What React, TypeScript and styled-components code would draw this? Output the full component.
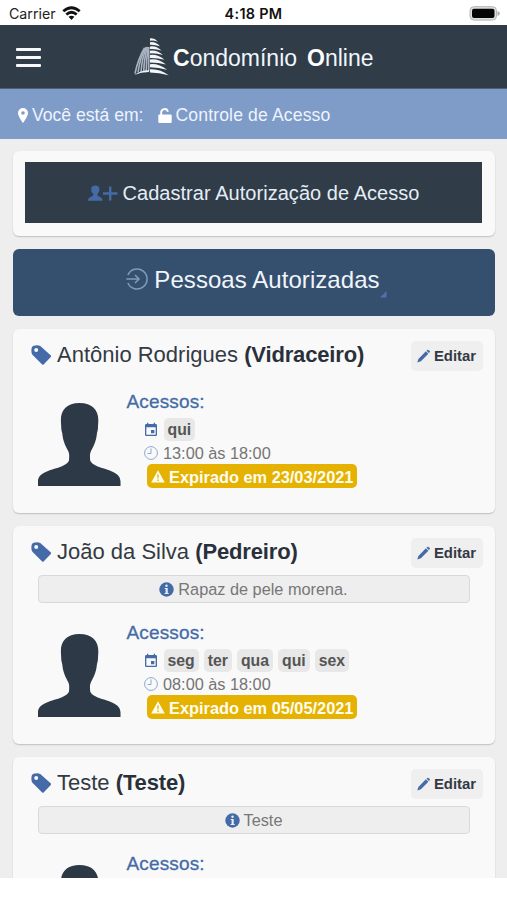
import React from "react";
import styled, { createGlobalStyle } from "styled-components";
import { MdEvent } from "react-icons/md";

const navy = "#303c48";
const blue = "#446ba8";

const GlobalStyle = createGlobalStyle`
  * { box-sizing: border-box; }
  body { margin: 0; background: #fff; font-family: "Liberation Sans", Arial, sans-serif; }
  svg { display: block; flex: none; }
`;

const Screen = styled.div`
  width: 507px;
  height: 900px;
  display: flex;
  flex-direction: column;
  overflow: hidden;
  background: #fff;
`;

const StatusBar = styled.div`
  height: 25px;
  flex: none;
  display: grid;
  grid-template-columns: 1fr auto 1fr;
  align-items: center;
  padding: 2px 7px 0 9px;
  font: 400 14.2px/20px Inter, sans-serif;
  color: #222;
`;

const Carrier = styled.div`
  display: flex;
  align-items: center;
  gap: 6px;
`;

const Time = styled.div`
  font-weight: 600;
  font-size: 14.4px;
  letter-spacing: 0.3px;
  margin-right: 2px;
  color: #111;
`;

const BatterySlot = styled.div`
  justify-self: end;
`;

const Header = styled.header`
  height: 64px;
  flex: none;
  display: flex;
  align-items: center;
  padding-left: 16px;
  background: ${navy};
  border-bottom: 1px solid #4f6075;
`;

const MenuButton = styled.button`
  width: 25px;
  height: 19px;
  margin-top: 2px;
  padding: 0;
  border: 0;
  background: none;
  display: flex;
  flex-direction: column;
  justify-content: space-between;

  span { height: 3px; width: 25px; background: #f6f8fa; border-radius: 1px; }
`;

const Brand = styled.div`
  display: flex;
  align-items: center;
  gap: 4px;
  margin-left: 93px;
  color: #f1f6fc;
  font-size: 23px;
  line-height: 28px;
  white-space: pre;
`;

const BrandName = styled.div`
  display: flex;
  gap: 10px;
  margin-top: 2px;
  b { color: #fff; }
`;

const Crumbs = styled.nav`
  height: 50px;
  flex: none;
  display: flex;
  align-items: center;
  padding: 2px 0 0 18px;
  background: #7f9bc8;
  color: #edf4fd;
  font-size: 17.6px;
  line-height: 22px;
`;

const Crumb = styled.div<{ $spacing: number }>`
  display: flex;
  align-items: center;
  gap: 4px;
  letter-spacing: ${(p) => p.$spacing}px;
  & + & { margin-left: 14px; }
`;

const Content = styled.main`
  height: 739px;
  flex: none;
  overflow: hidden;
  display: flex;
  flex-direction: column;
  gap: 13px;
  padding: 12px 12px 0 13px;
  background: #eee;
`;

const Card = styled.section<{ $height: number }>`
  height: ${(p) => p.$height}px;
  flex: none;
  border-radius: 6px;
  background: #f9f9f9;
  box-shadow: 0 1px 1.5px rgba(0, 0, 0, 0.2);
`;

const ActionCard = styled(Card)`
  padding: 11px 13px 0 12px;
`;

const AddButton = styled.button`
  width: 100%;
  height: 61px;
  display: flex;
  align-items: center;
  justify-content: center;
  gap: 5px;
  padding: 1px 0 0;
  border: 0;
  background: ${navy};
  color: #e4edf6;
  font: 400 20px/24px "Liberation Sans", Arial, sans-serif;
  letter-spacing: 0.04px;
`;

const SectionTitle = styled.h2`
  height: 67px;
  flex: none;
  margin: 0;
  display: flex;
  align-items: flex-start;
  justify-content: center;
  gap: 6px;
  padding: 17px 0 0 5px;
  border-radius: 6px;
  background: #35506e;
  color: #f0f5fb;
  font-size: 24px;
  font-weight: 400;
  line-height: 28px;
  letter-spacing: 0.06px;
  svg:first-child { margin-top: 2px; }
  svg:last-child { margin: 25px 0 0 -6px; }
`;

const PersonHead = styled.div`
  height: 52px;
  display: flex;
  align-items: center;
  padding: 0 12px 0 18px;
`;

const PersonName = styled.h3`
  margin: 0 0 0 5px;
  flex: 1;
  font-size: 22px;
  line-height: 26px;
  font-weight: 400;
  color: #343a43;
  white-space: nowrap;
  b { color: #29303a; letter-spacing: -0.15px; }
`;

const EditButton = styled.button`
  height: 30px;
  width: 72px;
  margin-top: 2px;
  display: flex;
  align-items: center;
  justify-content: center;
  gap: 4px;
  padding: 0 1px 0 0;
  border: 0;
  border-radius: 5px;
  background: #efefef;
  color: #333944;
  font: 700 14.9px/18px "Liberation Sans", Arial, sans-serif;
`;

const Note = styled.div`
  height: 28px;
  margin: -3px 25px 0;
  display: flex;
  align-items: center;
  justify-content: center;
  gap: 4px;
  padding-right: 1px;
  border: 1px solid #d9d9d9;
  border-radius: 4px;
  background: #eee;
  color: #777;
  font-size: 16.3px;
  line-height: 20px;
`;

const Details = styled.div<{ $top: number }>`
  display: flex;
  align-items: flex-start;
  gap: 6px;
  padding: ${(p) => p.$top}px 0 0 24.5px;
`;

const PhotoSlot = styled.div`
  margin-top: 13px;
`;

const AccessTitle = styled.h4`
  margin: 0;
  font-size: 19px;
  font-weight: 400;
  line-height: 24px;
  letter-spacing: 0.15px;
  color: ${blue};
  -webkit-text-stroke: 0.3px ${blue};
`;

const AccessList = styled.div`
  display: flex;
  flex-direction: column;
  align-items: flex-start;
  padding: 4px 0 0 17.5px;
`;

const DaysRow = styled.div`
  height: 23px;
  display: flex;
  align-items: center;
  gap: 5px;
  svg { margin-left: -1.5px; }
`;

const Days = styled.div`
  display: flex;
  gap: 5px;
`;

const Day = styled.span`
  height: 23px;
  padding: 2px 4px 0;
  border-radius: 5px;
  background: #e8e8e8;
  color: #555;
  font-size: 15.8px;
  font-weight: 700;
  line-height: 20px;
`;

const HoursRow = styled.div`
  height: 23px;
  display: flex;
  align-items: center;
  gap: 5px;
  color: #747474;
  font-size: 16.3px;
  line-height: 20px;
`;

const Expired = styled.div`
  height: 24px;
  margin-left: 3px;
  padding: 1px 4px 0;
  display: flex;
  align-items: center;
  gap: 4px;
  border-radius: 5px;
  background: #e5b202;
  color: #fffdf0;
  font-size: 16.35px;
  font-weight: 700;
  line-height: 20px;
`;

const WifiIcon = () => (
  <svg width="19" height="15" viewBox="0 0 19 15">
    <g fill="none" stroke="#111" strokeWidth="2.8">
      <path d="M1.3 5.2Q9.5-1.8 17.7 5.2" />
      <path d="M4.3 8.5Q9.5 4.1 14.7 8.5" />
    </g>
    <path d="M6.6 10.8Q9.5 8.5 12.4 10.8L9.5 14Z" fill="#111" />
  </svg>
);

const BatteryIcon = () => (
  <svg width="31" height="15" viewBox="0 0 31 15">
    <rect x="1" y=".7" width="26.5" height="13.4" rx="4" fill="#dedede" stroke="#b4b4b4" />
    <rect x="3" y="2.8" width="22.5" height="9.3" rx="2" fill="#050505" />
    <path d="M28.5 5q2.3.6 2.3 2.5T28.500 10Z" fill="#a9a9a9" />
  </svg>
);

const LogoIcon = () => (
  <svg width="35" height="38" viewBox="0 0 35 38">
    <g fill="none" stroke="#aab4c0" strokeWidth="1.6">
      <path d="M1 35.500Q4 21 10.500 10" />
      <path d="M4 34.500Q6 20 11.500 9.500" />
      <path d="M7 34Q8 20 12.500 9" />
      <path d="M9.700 33.500Q10.200 20 13.400 9" />
      <path d="M12.200 33.300Q12.200 20 14.400 9" />
      <path d="M14.700 33V9" />
    </g>
    <path d="M.3 37Q7 32 15 32.200V34Q7 34 .3 37Z" fill="#eef3f7" />
    <g fill="#f4f7fa">
      <path d="M16 .5Q20-.5 24 3.700Q20 2.300 16 2.700Z" />
      <path d="M16 4.200Q21 3.200 26 8.200Q21 6.500 16 6.700Z" />
      <path d="M16 8.400Q22 7.300 27.500 12.500Q22 10.600 16 11Z" />
      <path d="M16 12.700Q22.500 11.700 29 17Q22.500 15.100 16 15.400Z" />
      <path d="M16 17Q23.500 16 30.500 21.700Q23.500 19.700 16 19.900Z" />
      <path d="M16 21.500Q24.500 20.500 32 26.600Q24.500 24.500 16 24.500Z" />
      <path d="M16 26.200Q25 25.300 33 31.700Q25 29.200 16 29.200Z" />
      <path d="M16 31.200Q26 30.500 34.700 37.300Q25 34.600 16 34.400Z" />
    </g>
  </svg>
);

const PinIcon = () => (
  <svg width="10" height="15" viewBox="0 0 10 15">
    <path fillRule="evenodd" d="M5 0a5 5 0 0 1 5 5c0 3.500-5 10-5 10S0 8.500 0 5a5 5 0 0 1 5-5Zm0 3.200a1.800 1.800 0 1 0 0 3.600 1.800 1.800 0 0 0 0-3.600Z" fill="#fff" />
  </svg>
);

const UnlockIcon = () => (
  <svg width="14" height="15" viewBox="0 0 14 15">
    <rect x=".3" y="6.500" width="13.400" height="8.500" rx="1" fill="#fff" />
    <path d="M3.200 7V4.200a3.400 3.400 0 0 1 6.700-.5" fill="none" stroke="#fff" strokeWidth="1.900" />
  </svg>
);

const AddPersonIcon = () => (
  <svg width="30" height="17" viewBox="0 0 30 17">
    <path d="M7.300 .5c2.700 0 4.300 1.500 4.100 4.200-.1 2.100-1 3.100-1.900 4.100v1.900c1.500 1 5.100 1.300 5.100 5H0c0-3.700 3.700-4 5.100-5V8.800C4.200 7.800 3.300 6.800 3.200 4.700 3 2 4.600.5 7.300.5Z" fill={blue} />
    <path d="M15 8.500h14.500M22.200 1.500v14" stroke={blue} strokeWidth="2.400" fill="none" />
  </svg>
);

const EnterIcon = () => (
  <svg width="22" height="22" viewBox="0 0 22 22">
    <path d="M1.900 7A10 10 0 1 1 1.900 15M.4 11h12.300M9 7l4 4-4 4" fill="none" stroke="#7f9cbd" strokeWidth="1.500" />
  </svg>
);

const CornerIcon = () => (
  <svg width="7" height="7" viewBox="0 0 7 7">
    <path d="M6.500 0v6.500H0Z" fill="#526fae" />
  </svg>
);

const TagIcon = () => (
  <svg width="21" height="21" viewBox="0 0 21 21">
    <path fillRule="evenodd" d="M2.500.8C4.500.1 7.500 0 9.300.9L19.900 10.600Q20.300 11.300 19.800 12L12.600 19.500Q11.900 20 11.200 19.400L1.400 9.800C.1 8 .2 4.700.8 2.500Q1.300 1.200 2.500.8ZM5.200 2.900a2 2 0 1 0 0 4 2 2 0 0 0 0-4Z" fill={blue} />
  </svg>
);

const PencilIcon = () => (
  <svg width="13" height="14" viewBox="0 0 13 14">
    <path d="M.3 13.500 1.400 9.900 8.900 2.300l2.500 2.500-7.500 7.500ZM9.500 1.700l.8-.8q.6-.5 1.200 0l1.200 1.200q.5.600 0 1.200l-.8.8Z" fill={blue} />
  </svg>
);

const InfoIcon = () => (
  <svg width="15" height="15" viewBox="0 0 15 15">
    <circle cx="7.500" cy="7.500" r="7.200" fill={blue} />
    <circle cx="7.500" cy="3.700" r="1.200" fill="#e9eff8" />
    <path d="M5.700 6.100h3v5h1v1H5.600v-1h1v-4h-.9Z" fill="#e9eff8" />
  </svg>
);

const ClockIcon = () => (
  <svg width="14" height="14" viewBox="0 0 14 14">
    <path d="M7 .6a6.400 6.400 0 1 1 0 12.800A6.400 6.400 0 0 1 7 .6M7 2.500v5H3.600" fill="none" stroke="#91a8cd" />
  </svg>
);

const WarningIcon = () => (
  <svg width="14" height="13" viewBox="0 0 14 13">
    <path fillRule="evenodd" d="M7 .3 13.800 12.500H.2ZM6.200 4.500l.3 4h1l.3-4Zm.1 5.100v1.500h1.400V9.600Z" fill="#fffdf0" />
  </svg>
);

const Silhouette = () => (
  <svg width="83" height="83" viewBox="0 0 83 83">
    <path
      d="M41.500 0C54 0 60.500 7 60.300 17c0 3-.3 5-.3 7-.1 3-.5 4.500-1 6-1 9-3.300 13-6 18-1.500 3-1 6-.8 9.500 1 3 5 5 9 6.500 10 3.500 21.300 5.500 21.300 14.500V83H0V78.500C0 69.500 12 67.500 22 64c4-1.500 8-3.500 9-6.500.2-3.500.7-6.500-.8-9.500-2.700-5-5-9-6-18-.5-1.500-.9-3-1-6 0-2-.3-4-.3-7C22.700 7 29 0 41.500 0Z"
      fill="#2d3946"
    />
  </svg>
);

type Access = { days: string[]; hours: string; expired: string };

type Person = {
  name: string;
  role: string;
  note?: string;
  access?: Access;
  height: number;
};

const people: Person[] = [
  {
    name: "Antônio Rodrigues",
    role: "Vidraceiro",
    access: { days: ["qui"], hours: "13:00 às 18:00", expired: "23/03/2021" },
    height: 184,
  },
  {
    name: "João da Silva",
    role: "Pedreiro",
    note: "Rapaz de pele morena.",
    access: { days: ["seg", "ter", "qua", "qui", "sex"], hours: "08:00 às 18:00", expired: "05/05/2021" },
    height: 218,
  },
  { name: "Teste", role: "Teste", note: "Teste", height: 218 },
];

const PersonCard = ({ person }: { person: Person }) => (
  <Card $height={person.height}>
    <PersonHead>
      <TagIcon />
      <PersonName>
        {person.name} <b>({person.role})</b>
      </PersonName>
      <EditButton>
        <PencilIcon />
        Editar
      </EditButton>
    </PersonHead>
    {person.note && (
      <Note>
        <InfoIcon />
        {person.note}
      </Note>
    )}
    <Details $top={person.note ? 18 : 9}>
      <PhotoSlot>
        <Silhouette />
      </PhotoSlot>
      <div>
        <AccessTitle>Acessos:</AccessTitle>
        {person.access && (
          <AccessList>
            <DaysRow>
              <MdEvent size={16} color={blue} />
              <Days>
                {person.access.days.map((day) => (
                  <Day key={day}>{day}</Day>
                ))}
              </Days>
            </DaysRow>
            <HoursRow>
              <ClockIcon />
              {person.access.hours}
            </HoursRow>
            <Expired>
              <WarningIcon />
              Expirado em {person.access.expired}
            </Expired>
          </AccessList>
        )}
      </div>
    </Details>
  </Card>
);

export default function App() {
  return (
    <Screen>
      <GlobalStyle />
      <StatusBar>
        <Carrier>
          Carrier
          <WifiIcon />
        </Carrier>
        <Time>4:18 PM</Time>
        <BatterySlot>
          <BatteryIcon />
        </BatterySlot>
      </StatusBar>
      <Header>
        <MenuButton aria-label="Menu">
          <span />
          <span />
          <span />
        </MenuButton>
        <Brand>
          <LogoIcon />
          <BrandName>
            <span><b>C</b>ondomínio</span>
            <span><b>O</b>nline</span>
          </BrandName>
        </Brand>
      </Header>
      <Crumbs>
        <Crumb $spacing={0}>
          <PinIcon />
          Você está em:
        </Crumb>
        <Crumb $spacing={0.13}>
          <UnlockIcon />
          Controle de Acesso
        </Crumb>
      </Crumbs>
      <Content>
        <ActionCard $height={85}>
          <AddButton>
            <AddPersonIcon />
            Cadastrar Autorização de Acesso
          </AddButton>
        </ActionCard>
        <SectionTitle>
          <EnterIcon />
          Pessoas Autorizadas
          <CornerIcon />
        </SectionTitle>
        {people.map((person) => (
          <PersonCard key={person.name} person={person} />
        ))}
      </Content>
    </Screen>
  );
}
